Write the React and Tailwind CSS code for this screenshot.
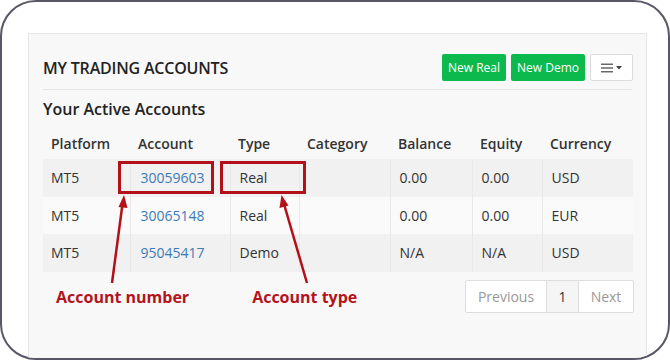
import { Fragment } from "react";

const rows = [
  { platform: "MT5", account: "30059603", type: "Real", category: "", balance: "0.00", equity: "0.00", currency: "USD" },
  { platform: "MT5", account: "30065148", type: "Real", category: "", balance: "0.00", equity: "0.00", currency: "EUR" },
  { platform: "MT5", account: "95045417", type: "Demo", category: "", balance: "N/A", equity: "N/A", currency: "USD" },
];

const headers = ["Platform", "Account", "Type", "Category", "Balance", "Equity", "Currency"];
const widths = [87, 100, 69, 91, 82, 70, 91];

function Annotations() {
  const red = "#b3111a";
  return (
    <svg
      className="absolute left-[-2px] top-[-2px] w-[670px] h-[360px] pointer-events-none"
      viewBox="0 0 670 360"
    >
      <rect x="119.5" y="162.5" width="93" height="30" fill="none" stroke={red} strokeWidth="3" />
      <rect x="221.5" y="162.5" width="83" height="30" fill="none" stroke={red} strokeWidth="3" />
      <line x1="112" y1="283" x2="122.5" y2="204" stroke={red} strokeWidth="2.5" />
      <polygon points="124,195 118.5,207 127.5,208" fill={red} />
      <line x1="307" y1="283" x2="284" y2="204" stroke={red} strokeWidth="2.5" />
      <polygon points="281.5,195 279.5,208 288.5,205.5" fill={red} />
    </svg>
  );
}

export default function App() {
  return (
    <div className="w-[670px] h-[360px] bg-white" style={{ fontFamily: "'Open Sans', 'Noto Sans', sans-serif" }}>
      <div className="relative w-full h-full border-2 border-[#575767] rounded-[36px] overflow-hidden pl-[26px] pt-[31px] pr-[21px]">
        <div className="h-[360px] bg-[#f8f8f8] border border-[#e6e6e6] px-[14px] pt-[20px]">
          <div className="flex items-center justify-between pb-[8px] border-b border-[#e4e4e4]">
            <h2 className="text-[16px] font-semibold text-[#222] tracking-[-0.2px]">MY TRADING ACCOUNTS</h2>
            <div className="flex items-center gap-[5px] mr-[-1px]">
              <button className="h-[27px] w-[64px] bg-[#0bb94c] text-white text-[12px] rounded-[2px]">New Real</button>
              <button className="h-[27px] w-[74px] bg-[#0bb94c] text-white text-[12px] rounded-[2px]">New Demo</button>
              <button className="h-[27px] w-[43px] flex items-center justify-center gap-[3px] bg-white border border-[#dcdcdc] rounded-[2px]">
                <svg width="12" height="10" viewBox="0 0 12 10">
                  <rect x="0" y="0.6" width="12" height="1.2" fill="#444" />
                  <rect x="0" y="4.4" width="12" height="1.2" fill="#444" />
                  <rect x="0" y="8.2" width="12" height="1.2" fill="#444" />
                </svg>
                <svg width="6" height="4" viewBox="0 0 6 4">
                  <polygon points="0,0 6,0 3,3.5" fill="#444" />
                </svg>
              </button>
            </div>
          </div>

          <h3 className="mt-[8px] text-[16px] font-semibold text-[#222] leading-[22px]">Your Active Accounts</h3>

          <table className="mt-[7px] table-fixed w-[590px] border-collapse text-[14px] text-[#333]">
            <colgroup>
              {widths.map((w, i) => (
                <col key={i} style={{ width: w }} />
              ))}
            </colgroup>
            <thead>
              <tr className="h-[32px]">
                {headers.map((h) => (
                  <th key={h} className="text-left font-semibold pl-[8px] text-[#333]">
                    {h}
                  </th>
                ))}
              </tr>
            </thead>
            <tbody>
              {rows.map((r, i) => (
                <tr key={r.account} className={i % 2 === 0 ? "h-[37.5px] bg-[#f1f1f1]" : "h-[37.5px] bg-[#fafafa]"}>
                  <td className="pl-[8px]">{r.platform}</td>
                  <td className="pl-[10px] border-l border-[#e8e8e8] text-[#3c7bb6]">{r.account}</td>
                  <td className="pl-[9px] border-l border-[#e8e8e8]">{r.type}</td>
                  <td className="pl-[9px] border-l border-[#e8e8e8]">{r.category}</td>
                  <td className="pl-[9px] border-l border-[#e8e8e8]">{r.balance}</td>
                  <td className="pl-[9px] border-l border-[#e8e8e8]">{r.equity}</td>
                  <td className="pl-[9px] border-l border-[#e8e8e8]">{r.currency}</td>
                </tr>
              ))}
            </tbody>
          </table>

          <div className="mt-[8px] flex items-start w-[591px]">
            <div className="ml-[13px] pt-[5px] flex gap-[63px] text-[16px] font-bold text-[#b3141b]">
              <span>Account number</span>
              <span>Account type</span>
            </div>
            <div className="ml-auto flex h-[33px] text-[14px] border border-[#dddddd] rounded-[2px] bg-white">
              <span className="w-[80px] flex items-center justify-center text-[#999]">Previous</span>
              <span className="w-[33px] flex items-center justify-center text-[#333] bg-[#f5f5f5] border-l border-r border-[#dddddd]">1</span>
              <span className="w-[54px] flex items-center justify-center text-[#999]">Next</span>
            </div>
          </div>
        </div>
        <Annotations />
      </div>
    </div>
  );
}
